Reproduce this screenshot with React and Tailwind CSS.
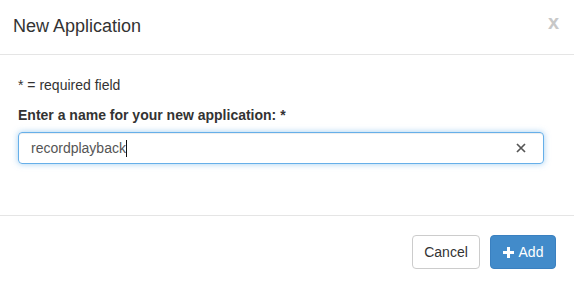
import React, { useState } from 'react';

function PlusIcon() {
  return (
    <svg width="11" height="11" viewBox="0 0 11 11" className="mr-[5px]">
      <path d="M4 0h3v4h4v3H7v4H4V7H0V4h4z" fill="#fff" />
    </svg>
  );
}

export default function App() {
  const [name, setName] = useState('recordplayback');

  return (
    <div
      className="w-[574px] h-[287px] bg-white text-[#333] overflow-hidden"
      style={{ fontFamily: '"Liberation Sans", Arial, sans-serif' }}
    >
      {/* Header */}
      <div className="h-[55px] flex items-center justify-between pl-[13px] pr-[15px] border-b border-[#e5e5e5]">
        <h4 className="text-[18px] leading-[20px] text-[#333] -mt-[2px]">New Application</h4>
        <button className="text-[20px] font-bold text-[#c8c8c8] leading-none -mt-[10px]">x</button>
      </div>

      {/* Body */}
      <div className="h-[160px] pl-[18px] pr-[30px] pt-[20px]">
        <p className="text-[14px] leading-[20px]">* = required field</p>
        <label className="block mt-[10px] text-[14px] leading-[20px] font-bold">
          Enter a name for your new application: *
        </label>
        <div className="relative mt-[7px] h-[32px] rounded-[4px] border border-[#66afe9] shadow-[inset_0_1px_1px_rgba(0,0,0,0.075),0_0_6px_rgba(102,175,233,0.6)] flex items-center">
          <span className="pl-[12px] text-[14px] text-[#555]">{name}</span>
          <span className="w-px h-[17px] bg-[#111]" />
          <button
            onClick={() => setName('')}
            className="absolute right-[17px] top-1/2 -translate-y-1/2"
          >
            <svg width="10" height="10" viewBox="0 0 10 10">
              <path d="M1 1L9 9M9 1L1 9" stroke="#555" strokeWidth="1.7" />
            </svg>
          </button>
        </div>
      </div>

      {/* Footer */}
      <div className="border-t border-[#e5e5e5] flex justify-end gap-[10px] pt-[19px] pr-[18px]">
        <button className="h-[34px] w-[68px] rounded-[4px] border border-[#ccc] bg-white text-[14px] text-[#333]">
          Cancel
        </button>
        <button className="h-[34px] w-[66px] rounded-[4px] border border-[#3a80c0] bg-[#428bca] text-[14px] text-white flex items-center justify-center">
          <PlusIcon />
          Add
        </button>
      </div>
    </div>
  );
}
